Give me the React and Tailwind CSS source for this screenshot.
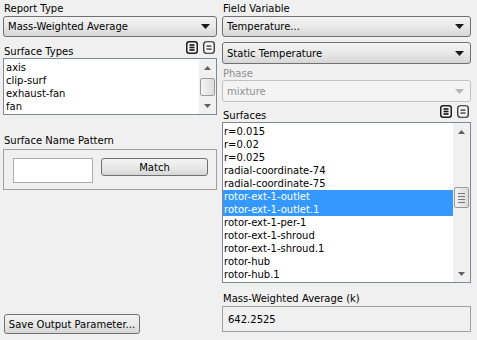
import React from 'react';

const font = { fontFamily: '"DejaVu Sans", Verdana, sans-serif' };

function Arrow({ disabled }) {
  return (
    <svg width="9" height="5" viewBox="0 0 9 5" className="shrink-0">
      <path d="M0 0 L9 0 L4.5 5 Z" fill={disabled ? '#b5b5b5' : '#1a1a1a'} />
    </svg>
  );
}

function Combo({ value, disabled, h = 'h-[21px]' }) {
  return (
    <div
      className={`${h} w-full flex items-center justify-between pl-[4px] pr-[6px] rounded-[3px] border ${
        disabled
          ? 'border-[#c2c2c2] bg-[#f4f4f4] text-[#8f8f8f]'
          : 'border-[#707070] bg-gradient-to-b from-[#f3f3f3] via-[#e9e9e9] to-[#d6d6d6] text-black'
      }`}
    >
      <span>{value}</span>
      <Arrow disabled={disabled} />
    </div>
  );
}

function SelectIcons() {
  return (
    <div className="flex items-center gap-[5px]">
      <svg width="12" height="13" viewBox="0 0 12 13">
        <rect x="0.75" y="0.75" width="10.5" height="11.5" rx="2.5" fill="#f6f6f6" stroke="#1e1e1e" strokeWidth="1.5" />
        <rect x="3.5" y="3.2" width="5" height="1.6" fill="#111" />
        <rect x="3.5" y="5.7" width="5" height="1.6" fill="#111" />
        <rect x="3.5" y="8.2" width="5" height="1.6" fill="#111" />
      </svg>
      <svg width="12" height="13" viewBox="0 0 12 13">
        <rect x="0.75" y="0.75" width="10.5" height="11.5" rx="2.5" fill="#f6f6f6" stroke="#1e1e1e" strokeWidth="1.2" />
        <rect x="3.5" y="4.5" width="5" height="1.1" fill="#111" />
        <rect x="3.5" y="7.5" width="5" height="1.1" fill="#111" />
      </svg>
    </div>
  );
}

function ScrollBar({ thumbTop, thumbH, grip }) {
  return (
    <div className="w-[17px] h-full flex flex-col items-center bg-[#f0f0f0] relative">
      <div className="h-[17px] w-full flex items-center justify-center">
        <svg width="7" height="4" viewBox="0 0 7 4"><path d="M0 4 L3.5 0 L7 4 Z" fill="#606060" /></svg>
      </div>
      <div className="flex-1" />
      <div className="h-[17px] w-full flex items-center justify-center">
        <svg width="7" height="4" viewBox="0 0 7 4"><path d="M0 0 L7 0 L3.5 4 Z" fill="#606060" /></svg>
      </div>
      <div
        className="absolute left-[1px] w-[15px] rounded-[2px] border border-[#9a9a9a] bg-gradient-to-r from-[#f4f4f4] to-[#dcdcdc] flex flex-col items-center justify-center gap-[2px]"
        style={{ top: thumbTop, height: thumbH }}
      >
        {grip && (
          <>
            <div className="w-[7px] h-px bg-[#777]" />
            <div className="w-[7px] h-px bg-[#777]" />
            <div className="w-[7px] h-px bg-[#777]" />
            <div className="w-[7px] h-px bg-[#777]" />
          </>
        )}
      </div>
    </div>
  );
}

export default function App() {
  const surfaceTypes = ['axis', 'clip-surf', 'exhaust-fan', 'fan'];
  const surfaces = [
    'r=0.015',
    'r=0.02',
    'r=0.025',
    'radial-coordinate-74',
    'radial-coordinate-75',
    'rotor-ext-1-outlet',
    'rotor-ext-1-outlet.1',
    'rotor-ext-1-per-1',
    'rotor-ext-1-shroud',
    'rotor-ext-1-shroud.1',
    'rotor-hub',
    'rotor-hub.1',
  ];
  const selected = ['rotor-ext-1-outlet', 'rotor-ext-1-outlet.1'];

  return (
    <div className="w-[477px] h-[340px] bg-[#f0f0f0] flex text-[10px] leading-[13px] text-black overflow-hidden" style={font}>
      {/* Left column */}
      <div className="w-[214px] ml-[3px] flex flex-col">
        <div className="mt-[2px] h-[14px] pl-[1px]">Report Type</div>
        <Combo value="Mass-Weighted Average" />
        <div className="mt-[4px] h-[17px] flex items-start justify-between pl-[1px] pr-[2px]">
          <span className="mt-[4px]">Surface Types</span>
          <SelectIcons />
        </div>
        <div className="h-[57px] border border-[#828790] bg-white flex">
          <div className="flex-1 pt-[2px] pl-[2px]">
            {surfaceTypes.map((s) => (
              <div key={s} className="h-[13px]">{s}</div>
            ))}
          </div>
          <ScrollBar thumbTop={19} thumbH={18} />
        </div>
        <div className="mt-[19px] h-[15px] pl-[1px]">Surface Name Pattern</div>
        <div className="h-[41px] border border-[#a0a0a0] flex items-start pt-[8px] pl-[9px] gap-[8px]">
          <div className="w-[80px] h-[25px] border border-[#abadb3] bg-white" />
          <div className="w-[107px] h-[18px] rounded-[3px] border border-[#707070] bg-gradient-to-b from-[#f3f3f3] via-[#e9e9e9] to-[#d6d6d6] flex items-center justify-center">
            Match
          </div>
        </div>
        <div className="flex-1" />
        <div className="mb-[6px] ml-[1px] w-[136px] h-[20px] rounded-[3px] border border-[#707070] bg-gradient-to-b from-[#f3f3f3] via-[#e9e9e9] to-[#d6d6d6] flex items-center justify-center whitespace-nowrap">
          Save Output Parameter...
        </div>
      </div>

      {/* Right column */}
      <div className="w-[249px] ml-[5px] flex flex-col">
        <div className="mt-[2px] h-[14px] pl-[1px]">Field Variable</div>
        <Combo value="Temperature..." />
        <div className="mt-[5px]">
          <Combo value="Static Temperature" h="h-[22px]" />
        </div>
        <div className="mt-[3px] h-[13px] pl-[1px] text-[#8f8f8f]">Phase</div>
        <Combo value="mixture" disabled h="h-[22px]" />
        <div className="mt-[3px] h-[17px] flex items-start justify-between pl-[1px] pr-[2px]">
          <span className="mt-[4px]">Surfaces</span>
          <SelectIcons />
        </div>
        <div className="h-[161px] border border-[#828790] bg-white flex">
          <div className="flex-1 pt-[2px]">
            {surfaces.map((s) => (
              <div
                key={s}
                className={`h-[13px] pl-[1px] ${selected.includes(s) ? 'bg-[#3399ff] text-white' : ''}`}
              >
                {s}
              </div>
            ))}
          </div>
          <ScrollBar thumbTop={64} thumbH={21} grip />
        </div>
        <div className="mt-[9px] h-[14px] pl-[1px]">Mass-Weighted Average (k)</div>
        <div className="h-[26px] w-full border border-[#a0a0a0] bg-[#f0f0f0] flex items-center pl-[5px]">
          642.2525
        </div>
      </div>
    </div>
  );
}
